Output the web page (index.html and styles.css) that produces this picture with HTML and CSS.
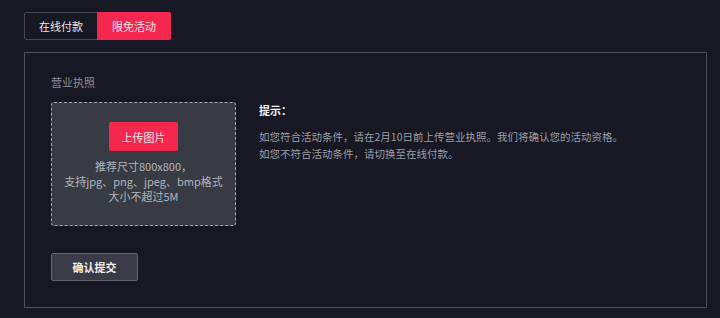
FILE: index.html
```html
<!DOCTYPE html>
<html lang="zh">
<head>
<meta charset="utf-8">
<link rel="stylesheet" href="styles.css">
</head>
<body>
<div class="page">
  <div class="tabs">
    <div class="tab">在线付款</div>
    <div class="tab active">限免活动</div>
  </div>
  <div class="panel">
    <div class="label">营业执照</div>
    <div class="row">
      <div class="upload">
        <div class="upload-btn">上传图片</div>
        <div class="upload-hint">推荐尺寸800x800，<br>支持jpg、png、jpeg、bmp格式<br>大小不超过5M</div>
      </div>
      <div class="tips">
        <div class="tips-title">提示：</div>
        <div class="tips-text">如您符合活动条件，请在2月10日前上传营业执照。我们将确认您的活动资格。<br>如您不符合活动条件，请切换至在线付款。</div>
      </div>
    </div>
    <div class="submit">确认提交</div>
  </div>
</div>
</body>
</html>
```
FILE: styles.css
```css
html, body {
  margin: 0;
  padding: 0;
  background: #171823;
  font-family: "Noto Sans CJK SC", "Noto Sans", sans-serif;
  font-size: 11px;
  color: #e6e6ea;
}
.page {
  padding: 12px 13px 0 24px;
}
.tabs {
  display: inline-flex;
  border: 1px solid #454751;
  border-radius: 2px;
  height: 26px;
}
.tab {
  width: 72px;
  display: flex;
  align-items: center;
  justify-content: center;
  color: #e8e8ec;
  font-size: 11px;
}
.tab.active {
  width: 74px;
  margin: -1px -1px -1px 0;
  height: 28px;
  background: #f5274f;
  color: #fde6ea;
  border-radius: 0 2px 2px 0;
}
.panel {
  margin-top: 12px;
  width: 681px;
  height: 254px;
  border: 1px solid #4b4d57;
}
.label {
  margin: 21px 0 0 26px;
  color: #8b8d95;
  line-height: 17px;
}
.row {
  display: flex;
  margin: 11px 0 0 26px;
}
.upload {
  width: 183px;
  height: 122px;
  background: #383b44;
  border: 1px dashed #a4a6ad;
  border-radius: 3px;
  display: flex;
  flex-direction: column;
  align-items: center;
}
.upload-btn {
  margin-top: 19px;
  width: 69px;
  height: 29px;
  background: #f5274f;
  border-radius: 2px;
  color: #fde6ea;
  display: flex;
  align-items: center;
  justify-content: center;
}
.upload-hint {
  margin-top: 8px;
  text-align: center;
  color: #b3b5bc;
  line-height: 15px;
}
.tips {
  margin-left: 23px;
}
.tips-title {
  font-weight: bold;
  color: #f2f2f4;
  line-height: 17px;
}
.tips-text {
  margin-top: 9px;
  color: #9c9ea6;
  font-size: 10.5px;
  line-height: 17px;
}
.submit {
  margin: 27px 0 0 26px;
  width: 85px;
  height: 26px;
  background: #3a3b46;
  border: 1px solid #62646e;
  border-radius: 2px;
  display: flex;
  align-items: center;
  justify-content: center;
  color: #f0f0f2;
  font-weight: bold;
}
```
